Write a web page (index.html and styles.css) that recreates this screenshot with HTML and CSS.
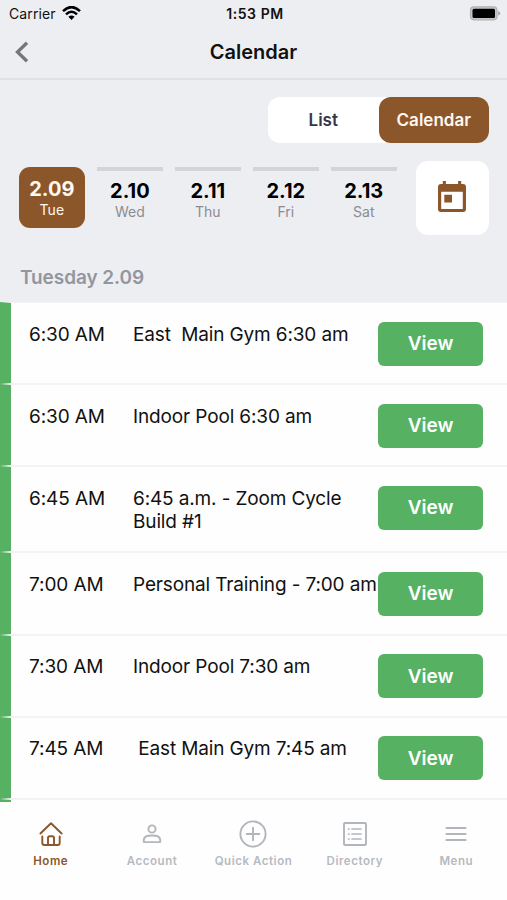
FILE: index.html
```html
<!DOCTYPE html>
<html lang="en">
<head>
<meta charset="utf-8">
<title>Calendar</title>
<link rel="stylesheet" href="styles.css">
</head>
<body>
<div class="app">
  <div class="status">
    <div class="carrier"><span>Carrier</span>
      <svg width="19" height="15" viewBox="0 0 19 15"><path d="M1 5.1Q9.5-2.9 18 5.1" fill="none" stroke="#000" stroke-width="2.6"/><path d="M4 8.3Q9.5 3.2 15 8.3" fill="none" stroke="#000" stroke-width="2.5"/><path d="M6.4 10.7Q9.5 8.2 12.6 10.7L9.5 14Z"/></svg>
    </div>
    <span class="clock">1:53 PM</span>
    <svg class="battery" width="32" height="15" viewBox="0 0 32 15"><rect x="1.500" y=".8" width="26.5" height="13" rx="3.5" fill="#c5c6c8" stroke="#b0b1b3" stroke-width="1.2"/><rect x="3.500" y="2.7" width="22.5" height="9.3" rx="1.5"/><path d="M29.2 5v4.7q2-.8 2-2.35T29.2 5Z" fill="#a5a6a8"/></svg>
  </div>
  <header class="header">
    <svg class="back" width="14" height="22" viewBox="0 0 14 22"><path d="M12 1.8 2.5 11 12 20.2" fill="none" stroke="#767678" stroke-width="3.3"/></svg>
    <h1>Calendar</h1>
  </header>
  <div class="controls">
    <div class="toggle"><span class="tab">List</span><span class="tab selected">Calendar</span></div>
    <div class="days">
      <div class="day active"><b>2.09</b><span>Tue</span></div>
      <div class="day"><b>2.10</b><span>Wed</span></div>
      <div class="day"><b>2.11</b><span>Thu</span></div>
      <div class="day"><b>2.12</b><span>Fri</span></div>
      <div class="day"><b>2.13</b><span>Sat</span></div>
      <div class="picker"><svg width="28" height="31" viewBox="0 0 28 31"><path fill="#8b562a" fill-rule="evenodd" d="M4.8 0h3.1v3.1h12.2V0h3.1v3.1H25q3 0 3 3v21.8q0 3-3 3H3q-3 0-3-3V6.100q0-3 3-3h1.800ZM3.200 10.700v17.200h21.600V10.700ZM6.300 13.800H14v7.700H6.300Z"/></svg></div>
    </div>
    <h2>Tuesday 2.09</h2>
  </div>
  <main class="list">
    <div class="row"><span class="time">6:30 AM</span><span class="name">East&nbsp; Main Gym 6:30 am</span><span class="view">View</span></div>
    <div class="row"><span class="time">6:30 AM</span><span class="name">Indoor Pool 6:30 am</span><span class="view">View</span></div>
    <div class="row tall"><span class="time">6:45 AM</span><span class="name">6:45 a.m. - Zoom Cycle<br>Build #1</span><span class="view">View</span></div>
    <div class="row"><span class="time">7:00 AM</span><span class="name">Personal Training - 7:00 am</span><span class="view">View</span></div>
    <div class="row"><span class="time">7:30 AM</span><span class="name">Indoor Pool 7:30 am</span><span class="view">View</span></div>
    <div class="row"><span class="time">7:45 AM</span><span class="name">&nbsp;East Main Gym 7:45 am</span><span class="view">View</span></div>
    <div class="row"></div>
  </main>
  <nav class="nav">
    <div class="item current"><svg width="28" height="28" viewBox="0 0 28 28"><path d="M3.400 13.500 14 3.300l10.600 10.200M5.300 16.500V23q0 2 2 2h13.400q2 0 2-2v-6.500M11 25v-7q0-1.800 1.800-1.800h2.400q1.800 0 1.800 1.800v7"/></svg><span>Home</span></div>
    <div class="item"><svg width="28" height="28" viewBox="0 0 28 28"><circle cx="14" cy="9" r="3.600"/><path d="M5.800 22.100v-2.300q0-4.300 8.200-4.300t8.200 4.300v2.300Z"/></svg><span>Account</span></div>
    <div class="item"><svg width="28" height="28" viewBox="0 0 28 28"><circle cx="14" cy="14" r="12.600"/><path d="M14 7.700v12.600M7.700 14h12.600"/></svg><span>Quick Action</span></div>
    <div class="item"><svg width="28" height="28" viewBox="0 0 28 28"><rect x="3" y="3" width="22" height="22" rx="1"/><path d="M11 9h9M11 14h9M11 19h9M7.500 9h.6M7.500 14h.6M7.500 19h.6" stroke-width="1.700"/></svg><span>Directory</span></div>
    <div class="item"><svg width="28" height="28" viewBox="0 0 28 28"><path d="M4.500 8h19M4.500 14h19M4.500 20h19" stroke-width="2.200"/></svg><span>Menu</span></div>
  </nav>
</div>
</body>
</html>
```
FILE: styles.css
```css
* { box-sizing: border-box; }
body { margin: 0; font-family: Inter, "Liberation Sans", sans-serif; background: #fefefe; color: #111; }
h1, h2 { margin: 0; }
.app { width: 507px; height: 900px; display: flex; flex-direction: column; background: #edeef2; overflow: hidden; }
.status { height: 28px; display: grid; grid-template-columns: 1fr auto 1fr; align-items: center; padding: 0 6px 1px 9px; font-size: 14px; }
.carrier { display: flex; align-items: center; gap: 6px; letter-spacing: .1px; }
.carrier svg { margin-top: -1px; }
.clock { font-weight: 600; font-size: 14px; letter-spacing: .55px; }
.battery { justify-self: end; }
.header { height: 52px; flex: none; display: grid; grid-template-columns: 1fr auto 1fr; align-items: center; padding: 0 15px 3px; border-bottom: 2px solid #dfe0e4; }
.header h1 { font-size: 20px; font-weight: 600; letter-spacing: 0; line-height: 24px; }
.controls { height: 222px; flex: none; padding: 17px 18px 0 19px; }
.toggle { width: 221px; height: 46px; margin-left: auto; display: flex; background: #fff; border-radius: 12px; }
.tab { flex: 1; display: flex; align-items: center; justify-content: center; font-size: 17px; font-weight: 600; color: #34374a; }
.tab.selected { background: #8b562a; color: #fff8f0; border-radius: 12px; }
.days { display: flex; gap: 12.300px; margin-top: 18px; height: 73px; padding-top: 6px; }
.day { width: 65.700px; height: 61px; display: flex; flex-direction: column; align-items: center; border-top: 4px solid #d2d4d8; padding-top: 8px; }
.day b { font-size: 20px; line-height: 24px; font-weight: 700; color: #000; letter-spacing: 0; }
.day span { font-size: 14px; line-height: 18px; color: #8b8c91; }
.day.active { background: #8b562a; border: 0; border-radius: 11px; padding-top: 10px; }
.day.active b, .day.active span { color: #fff8f0; }
.picker { width: 73px; height: 74px; flex: none; margin: -6px 0 0 auto; background: #fff; border-radius: 12px; display: flex; align-items: center; justify-content: center; }
.picker svg { margin: -4px 1px 0 0; }
.controls h2 { margin-top: 32px; font-size: 19px; line-height: 24px; font-weight: 600; color: #93969e; padding-left: 1px; letter-spacing: -.08px; }
.list { height: 500px; flex: none; overflow: hidden; background: #fefefe; }
.row { height: 82.200px; display: flex; align-items: flex-start; border-left: 11px solid #56b262; border-top: 1px solid #f3f3f4; border-bottom: 1px solid #f3f3f4; padding: 19px 24px 0 18px; background: #fefefe; font-size: 19px; line-height: 23px; }
.row.tall { height: 86px; }
.time { width: 104px; flex: none; letter-spacing: -.1px; padding-top: .5px; }
.name { width: 245px; flex: none; white-space: nowrap; letter-spacing: -.14px; padding-top: .5px; }
.view { width: 105px; height: 44px; margin-top: -.5px; flex: none; display: flex; align-items: center; justify-content: center; background: #56b262; color: #fff; font-weight: 600; border-radius: 6px; }
.nav { flex: 1; background: #fefefe; display: flex; padding-top: 18px; }
.item { width: 101.400px; display: flex; flex-direction: column; align-items: center; gap: 5px; font-size: 11.500px; line-height: 17px; font-weight: 600; letter-spacing: .55px; color: #b6bac1; white-space: nowrap; }
.item svg { fill: none; stroke: #b2b6bc; stroke-width: 1.900; stroke-linecap: round; stroke-linejoin: round; }
.item.current { color: #8b562a; }
.item.current svg { stroke: #8b562a; }
```
